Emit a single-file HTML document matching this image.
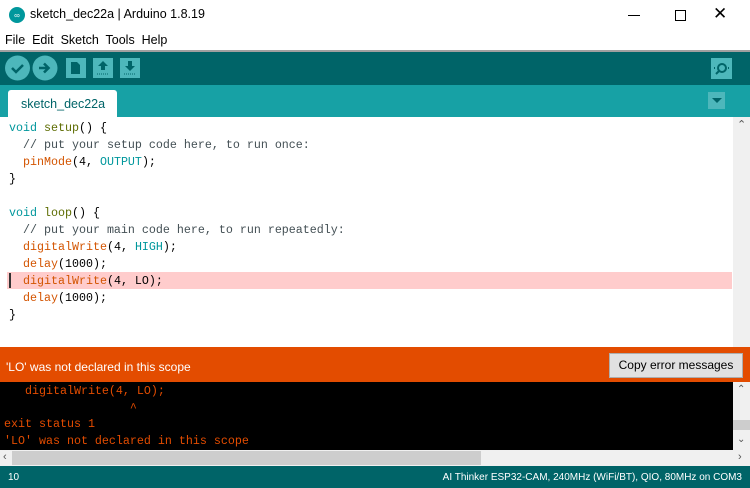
<!DOCTYPE html>
<html><head><style>
body{margin:0;width:750px;height:488px;overflow:hidden;background:#fff;font-family:"Liberation Sans",sans-serif;position:relative}
.a{position:absolute}
.code{font-family:"Liberation Mono",monospace;font-size:11.67px;line-height:17px;white-space:pre}
.k{color:#00979c}.f{color:#d35400}.c{color:#434f54}.s{color:#5e6d03}
</style></head><body>
<svg class="a" style="left:9px;top:7px" width="16" height="16"><circle cx="8" cy="8" r="8" fill="#00979c"/><text x="8" y="11" font-size="8" fill="#fff" text-anchor="middle" font-family="Liberation Sans">∞</text></svg>
<div class="a" style="left:30px;top:7px;font-size:12.5px;color:#000">sketch_dec22a | Arduino 1.8.19</div>
<div class="a" style="left:628px;top:15px;width:12px;height:1px;background:#000"></div>
<div class="a" style="left:675px;top:10px;width:9px;height:9px;border:1px solid #000"></div>
<div class="a" style="left:713px;top:4px;font-size:17px">✕</div>
<div class="a" style="left:5px;top:33px;font-size:12.5px">File&nbsp; Edit&nbsp; Sketch&nbsp; Tools&nbsp; Help</div>
<div class="a" style="left:0;top:50px;width:750px;height:2px;background:#a0a0a0"></div>
<div class="a" style="left:0;top:52px;width:750px;height:33px;background:#006468"></div>
<svg class="a" style="left:0;top:52px" width="750" height="33">
<circle cx="17.5" cy="16" r="12.5" fill="#4db7bb"/><path d="M12 16l4 4 7-7" stroke="#006468" stroke-width="2.5" fill="none"/>
<circle cx="45" cy="16" r="12.5" fill="#4db7bb"/><path d="M39 16h8M44 11.5l4.5 4.5-4.5 4.5" stroke="#006468" stroke-width="2.6" fill="none"/>
<rect x="66" y="6" width="20" height="20" fill="#4db7bb"/><path d="M71 10h6l3 3v9h-9z" fill="#006468"/>
<rect x="93" y="6" width="20" height="20" fill="#4db7bb"/><path d="M103 9l-5 5h3v4h4v-4h3z" fill="#006468"/><path d="M97 22h12" stroke="#006468" stroke-dasharray="1 1"/>
<rect x="120" y="6" width="20" height="20" fill="#4db7bb"/><path d="M130 19l-5-5h3v-5h4v5h3z" fill="#006468"/><path d="M124 22h12" stroke="#006468" stroke-dasharray="1 1"/>
<rect x="711" y="6" width="21" height="21" fill="#4db7bb"/><circle cx="722" cy="16" r="4" stroke="#006468" stroke-width="2" fill="none"/><path d="M719 19l-3 3M714 16h1M728 16h1" stroke="#006468" stroke-width="2"/>
</svg>
<div class="a" style="left:0;top:85px;width:750px;height:32px;background:#17a1a5"></div>
<div class="a" style="left:8px;top:90px;width:109px;height:27px;background:#fff;border-radius:3px 3px 0 0"></div>
<div class="a" style="left:21px;top:97px;font-size:12.5px;color:#006468">sketch_dec22a</div>
<div class="a" style="left:708px;top:92px;width:17px;height:17px;background:#4db7bb"></div>
<div class="a" style="left:712px;top:98px;border-left:5px solid transparent;border-right:5px solid transparent;border-top:5px solid #006468"></div>
<div class="a" style="left:733px;top:117px;width:17px;height:230px;background:#f0f0f0"></div>
<div class="a" style="left:737px;top:118px;font-size:11px;color:#555">⌃</div>
<div class="a" style="left:7px;top:272px;width:725px;height:17px;background:#ffcccc"></div>
<div class="a" style="left:9px;top:273px;width:2px;height:15px;background:#333"></div>
<div class="a code" style="left:9px;top:120px"><span class="k">void</span> <span class="s">setup</span>() {
  <span class="c">// put your setup code here, to run once:</span>
  <span class="f">pinMode</span>(4, <span class="k">OUTPUT</span>);
}

<span class="k">void</span> <span class="s">loop</span>() {
  <span class="c">// put your main code here, to run repeatedly:</span>
  <span class="f">digitalWrite</span>(4, <span class="k">HIGH</span>);
  <span class="f">delay</span>(1000);
  <span class="f">digitalWrite</span>(4, LO);
  <span class="f">delay</span>(1000);
}</div>
<div class="a" style="left:0;top:347px;width:750px;height:35px;background:#e34c00"></div>
<div class="a" style="left:6px;top:360px;font-size:12px;color:#fff">'LO' was not declared in this scope</div>
<div class="a" style="left:609px;top:353px;width:132px;height:23px;background:#e1e1e1;border:1px solid #adadad;font-size:12px;text-align:center;line-height:23px">Copy error messages</div>
<div class="a" style="left:0;top:382px;width:733px;height:68px;background:#000"></div>
<div class="a" style="left:733px;top:382px;width:17px;height:68px;background:#f0f0f0"></div>
<div class="a" style="left:733px;top:420px;width:17px;height:10px;background:#cdcdcd"></div>
<div class="a" style="left:737px;top:384px;font-size:10px;color:#555">⌃</div>
<div class="a" style="left:737px;top:434px;font-size:10px;color:#555">⌄</div>
<div class="a code" style="left:4px;top:383px;color:#e34c00;line-height:16.7px">   digitalWrite(4, LO);
                  ^
exit status 1
'LO' was not declared in this scope</div>
<div class="a" style="left:0;top:450px;width:750px;height:16px;background:#f0f0f0"></div>
<div class="a" style="left:12px;top:451px;width:469px;height:14px;background:#cdcdcd"></div>
<div class="a" style="left:3px;top:451px;font-size:11px;color:#555">‹</div>
<div class="a" style="left:738px;top:451px;font-size:11px;color:#555">›</div>
<div class="a" style="left:0;top:466px;width:750px;height:22px;background:#006468"></div>
<div class="a" style="left:8px;top:472px;font-size:10px;color:#fff">10</div>
<div class="a" style="right:8px;top:472px;font-size:10px;color:#fff">AI Thinker ESP32-CAM, 240MHz (WiFi/BT), QIO, 80MHz on COM3</div>
</body></html>
